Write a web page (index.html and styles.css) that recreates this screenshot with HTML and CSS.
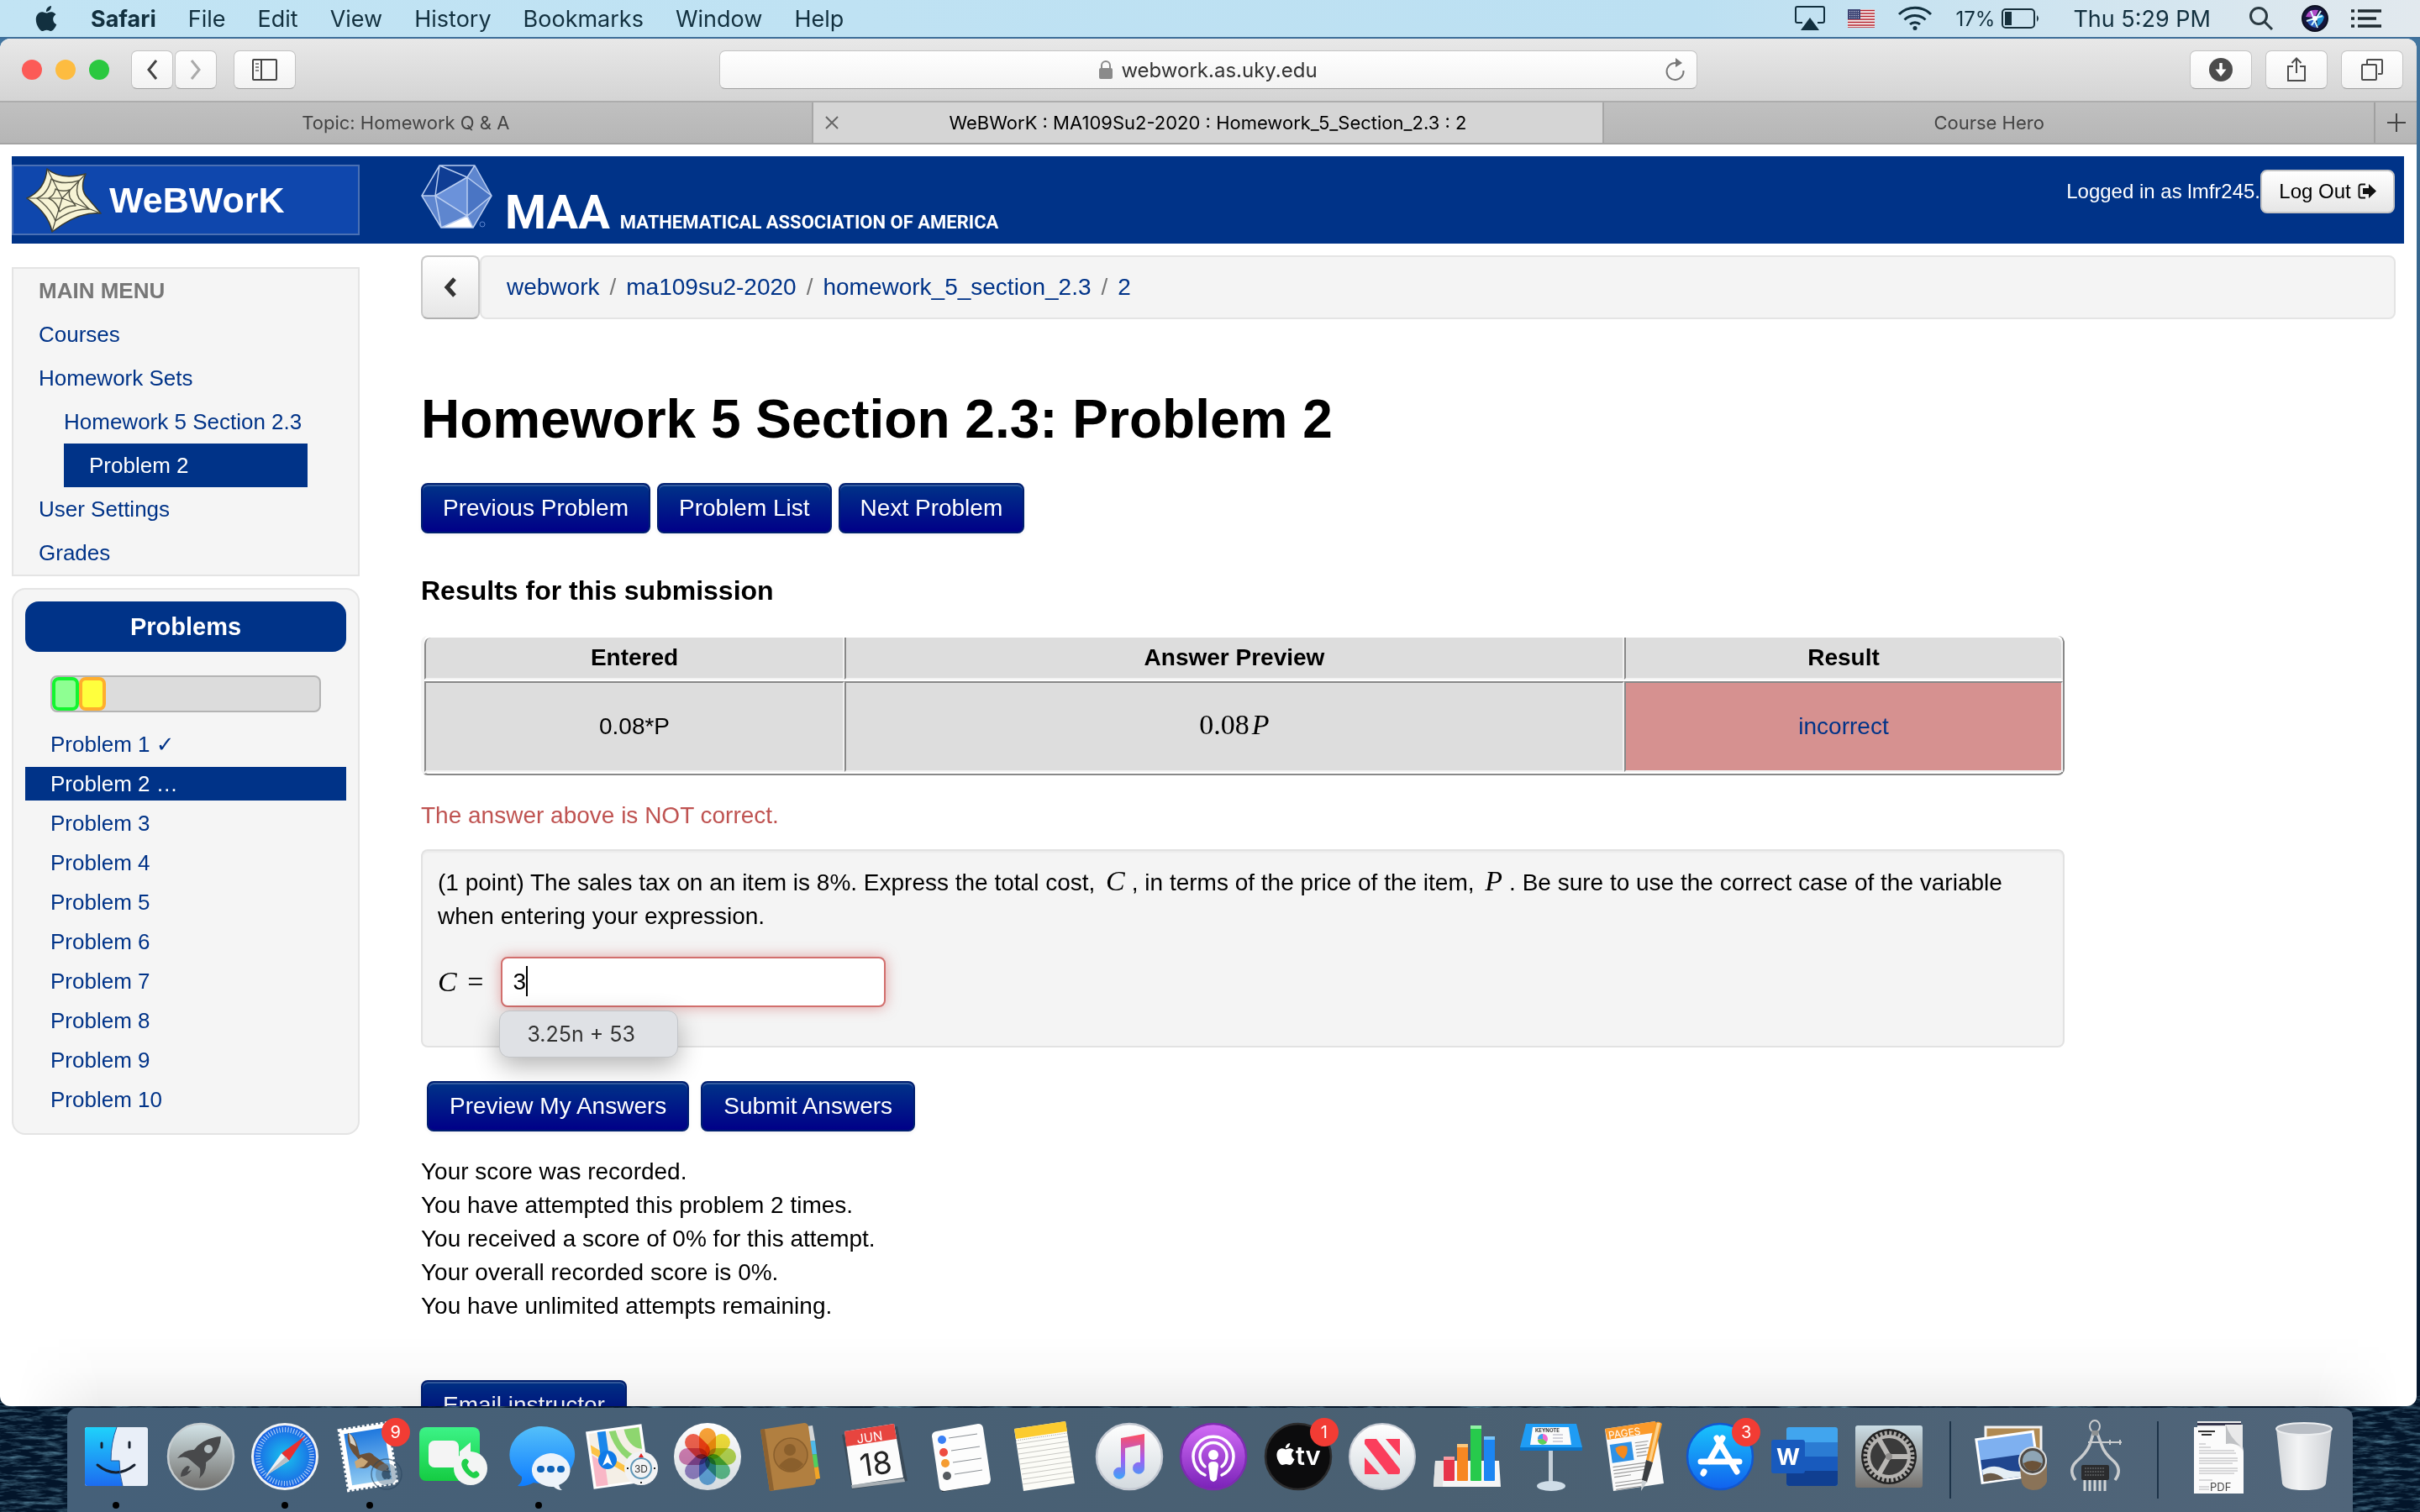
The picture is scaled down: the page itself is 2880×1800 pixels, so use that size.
FILE: index.html
```html
<!DOCTYPE html>
<html lang="en">
<head>
  <meta charset="UTF-8">
  <meta name="viewport" content="width=device-width, initial-scale=1.0">
  <title>WeBWorK : MA109Su2-2020 : Homework_5_Section_2.3 : 2</title>
  <link rel="stylesheet" href="styles.css">
</head>
<body>

  <!-- shared shapes -->
  <svg class="defs" width="0" height="0" aria-hidden="true">
    <defs>
      <symbol id="apple" viewBox="0 0 24 24">
        <path d="M12.152 6.896c-.948 0-2.415-1.078-3.96-1.04-2.04.027-3.91 1.183-4.961 3.014-2.117 3.675-.546 9.103 1.519 12.09 1.013 1.454 2.208 3.09 3.792 3.039 1.52-.065 2.09-.987 3.935-.987 1.831 0 2.35.987 3.96.948 1.637-.026 2.676-1.48 3.676-2.948 1.156-1.688 1.636-3.325 1.662-3.415-.039-.013-3.182-1.221-3.22-4.857-.026-3.04 2.48-4.494 2.597-4.559-1.429-2.09-3.623-2.324-4.39-2.376-2-.156-3.675 1.09-4.61 1.09zM15.53 3.83c.843-1.012 1.4-2.427 1.245-3.83-1.207.052-2.662.805-3.532 1.818-.78.896-1.454 2.338-1.273 3.714 1.338.104 2.715-.688 3.559-1.701"/>
      </symbol>
      <filter id="waves" x="0" y="0" width="100%" height="100%">
        <feTurbulence type="fractalNoise" baseFrequency="0.04 0.22" numOctaves="4" seed="8"/>
        <feColorMatrix values="0 0 0 0 0.12  0 0 0 0 0.29  0 0 0 0 0.40  1.8 0 0 0 -0.8"/>
      </filter>
      <linearGradient id="silver" x1="0" y1="0" x2="0" y2="1"><stop offset="0" stop-color="#fff"/><stop offset="1" stop-color="#d3dadf"/></linearGradient>
      <linearGradient id="finderL" x1="0" y1="0" x2="0" y2="1"><stop offset="0" stop-color="#1fd2fb"/><stop offset="1" stop-color="#1c6cf0"/></linearGradient>
      <linearGradient id="launch" x1="0" y1="0" x2="0" y2="1"><stop offset="0" stop-color="#d3e4e8"/><stop offset="1" stop-color="#6f6d6a"/></linearGradient>
      <radialGradient id="compass"><stop offset="0" stop-color="#19c3ee"/><stop offset="1" stop-color="#1a63e4"/></radialGradient>
      <linearGradient id="sky" x1="0" y1="0" x2="0" y2="1"><stop offset="0" stop-color="#1f78de"/><stop offset="1" stop-color="#8fcaf2"/></linearGradient>
      <linearGradient id="green" x1="0" y1="0" x2="0" y2="1"><stop offset="0" stop-color="#3cf387"/><stop offset="1" stop-color="#15cc42"/></linearGradient>
      <linearGradient id="blue" x1="0" y1="0" x2="0" y2="1"><stop offset="0" stop-color="#54c0fa"/><stop offset="1" stop-color="#0e7cff"/></linearGradient>
      <linearGradient id="note" x1="0" y1="0" x2="0" y2="1"><stop offset="0" stop-color="#ff4f60"/><stop offset=".55" stop-color="#a45cf0"/><stop offset="1" stop-color="#3aa4f8"/></linearGradient>
      <linearGradient id="purple" x1="0" y1="0" x2="0" y2="1"><stop offset="0" stop-color="#d26df6"/><stop offset="1" stop-color="#7a22b8"/></linearGradient>
      <linearGradient id="store" x1="0" y1="0" x2="0" y2="1"><stop offset="0" stop-color="#19c5fc"/><stop offset="1" stop-color="#1161ee"/></linearGradient>
      <linearGradient id="prefs" x1="0" y1="0" x2="0" y2="1"><stop offset="0" stop-color="#cbdde5"/><stop offset="1" stop-color="#77736f"/></linearGradient>
      <linearGradient id="trash" x1="0" y1="0" x2="1" y2="0"><stop offset="0" stop-color="#d5d8db"/><stop offset=".4" stop-color="#f3f4f5"/><stop offset="1" stop-color="#cfd2d6"/></linearGradient>
    </defs>
  </svg>

  <svg class="wallpaper" aria-hidden="true"><rect width="100%" height="100%" filter="url(#waves)"/></svg>

  <header class="menubar">
    <nav class="menus">
      <svg class="apple" viewBox="0 0 24 24" width="30" height="30"><use href="#apple"/></svg>
      <b>Safari</b>
      <span>File</span>
      <span>Edit</span>
      <span>View</span>
      <span>History</span>
      <span>Bookmarks</span>
      <span>Window</span>
      <span>Help</span>
    </nav>
    <div class="status">
      <svg width="36" height="30" viewBox="0 0 36 30"><path d="M9 20H3a2 2 0 0 1-2-2V3a2 2 0 0 1 2-2h30a2 2 0 0 1 2 2v15a2 2 0 0 1-2 2h-6" fill="none" stroke="#12303f" stroke-width="2"/><path d="M18 14l11 15H7z" fill="#12303f"/></svg>
      <svg class="flag" width="32" height="22" viewBox="0 0 32 22"><rect width="32" height="22" fill="#f4f0f0"/><path d="M0 1.500h32M0 5h32M0 8.500h32M0 12h32M0 15.500h32M0 19h32M0 22h32" stroke="#b5202d" stroke-width="1.700"/><rect width="15" height="12" fill="#3d4474"/><path d="M2 2.500h12M2 5h12M2 7.500h12M2 10h12" stroke="#dfe2f0" stroke-width="1" stroke-dasharray="1 1.500"/></svg>
      <svg class="wifi" width="42" height="30" viewBox="0 0 42 30" fill="none" stroke="#12303f" stroke-width="3"><path d="M2 10a27 27 0 0 1 38 0M8.500 16.500a18 18 0 0 1 25 0M15 22a9 9 0 0 1 12 0"/><circle cx="21" cy="26.500" r="2.500" fill="#12303f" stroke="none"/></svg>
      <div class="battery">
        <span>17%</span>
        <svg width="46" height="24" viewBox="0 0 46 24"><rect x="1" y="1" width="38" height="22" rx="4" fill="none" stroke="#17303c" stroke-width="2"/><rect x="4" y="4" width="8" height="16" fill="#17303c"/><path d="M42 8q4 4 0 8z" fill="#17303c"/></svg>
      </div>
      <span class="clock">Thu 5:29 PM</span>
      <svg class="search" width="30" height="30" viewBox="0 0 30 30" fill="none" stroke="#2b3a42" stroke-width="3"><circle cx="12" cy="12" r="9.500"/><path d="M19 19l9 9"/></svg>
      <svg class="siri" width="32" height="32" viewBox="0 0 32 32"><circle cx="16" cy="16" r="15" fill="#16163c" stroke="#0c1020" stroke-width="2"/><path d="M5 14Q8 4 20 6q-2 6-5 9z" fill="#b04bc8"/><path d="M18 14q6-6 9 0-2 9-8 11z" fill="#1f8fd0"/><path d="M7 20l9-5 1 12q-7-1-10-7z" fill="#2a5fc4"/><path d="M6 19l19-6M11 7l8 20M23 7L12 24" stroke="#d8fbff" stroke-width="2"/><circle cx="16" cy="16" r="3" fill="#fff"/></svg>
      <svg width="36" height="22" viewBox="0 0 36 22" stroke="#1f2a30" stroke-width="3.500"><path d="M0 2h4M8 2h28M0 11h4M8 11h22M0 20h4M8 20h28"/></svg>
    </div>
  </header>

  <main class="window">
    <div class="toolbar">
      <div class="lights"><i class="red"></i><i class="yellow"></i><i class="green"></i></div>
      <div class="history">
        <button class="tool" aria-label="Back"><svg width="16" height="26" viewBox="0 0 16 26"><path d="M13 2L4 13l9 11" fill="none" stroke="#444" stroke-width="3"/></svg></button>
        <button class="tool" aria-label="Forward"><svg width="16" height="26" viewBox="0 0 16 26"><path d="M3 2l9 11-9 11" fill="none" stroke="#aaa" stroke-width="3"/></svg></button>
      </div>
      <button class="tool wide" aria-label="Show sidebar"><svg width="30" height="26" viewBox="0 0 30 26" fill="none" stroke="#444" stroke-width="2"><rect x="1" y="1" width="28" height="24" rx="1"/><path d="M11 1v24"/><path d="M4 6h4M4 10h4M4 14h4" stroke="#888"/></svg></button>
      <div class="address">
        <svg width="16" height="22" viewBox="0 0 16 22"><rect x="0" y="9" width="16" height="13" rx="2" fill="#8a8a8a"/><path d="M3 10V6a5 5 0 0 1 10 0v4" fill="none" stroke="#8a8a8a" stroke-width="2"/></svg>
        <span>webwork.as.uky.edu</span>
        <button class="reload" aria-label="Reload"><svg width="26" height="28" viewBox="0 0 26 28"><path d="M22.500 15a10 10 0 1 1-10-9h3" fill="none" stroke="#777" stroke-width="2"/><path d="M13 0l8 6-8 5z" fill="#777"/></svg></button>
      </div>
      <div class="actions">
        <button class="tool wide" aria-label="Downloads"><svg width="28" height="28" viewBox="0 0 28 28"><circle cx="14" cy="14" r="14" fill="#4c4c4c"/><path d="M14 6v9" stroke="#fff" stroke-width="3.500"/><path d="M7.500 13.500h13L14 22z" fill="#fff"/></svg></button>
        <button class="tool wide" aria-label="Share"><svg width="24" height="32" viewBox="0 0 24 32" fill="none" stroke="#4c4c4c" stroke-width="2"><path d="M8 12H2v17h20V12h-6M12 20V3M6.500 8L12 2.500 17.500 8"/></svg></button>
        <button class="tool wide" aria-label="Show tabs"><svg width="26" height="26" viewBox="0 0 26 26" fill="none" stroke="#4c4c4c" stroke-width="2"><rect x="1" y="7" width="17" height="18" rx="1"/><path d="M7 7V2a1 1 0 0 1 1-1h16a1 1 0 0 1 1 1v15a1 1 0 0 1-1 1h-4"/></svg></button>
      </div>
    </div>

    <div class="tabs">
      <div class="tab">Topic: Homework Q &amp; A</div>
      <div class="tab current">
        <button class="close" aria-label="Close tab"><svg width="16" height="16" viewBox="0 0 16 16"><path d="M1 1l14 14M15 1L1 15" stroke="#666" stroke-width="2"/></svg></button>
        WeBWorK : MA109Su2-2020 : Homework_5_Section_2.3 : 2
      </div>
      <div class="tab">Course Hero</div>
      <button class="newtab" aria-label="New tab"><svg width="22" height="22" viewBox="0 0 22 22"><path d="M11 0v22M0 11h22" stroke="#444" stroke-width="2"/></svg></button>
    </div>

    <div class="page">
      <div class="masthead">
        <a class="brand" href="#">
          <svg width="92" height="78" viewBox="0 0 92 78" stroke-linejoin="round">
            <path d="M2 37Q24 27 26 2q16 14 46 6-7 16 0 26l18 21Q64 52 32 77 28 55 2 37z" fill="#f7f4d5" stroke="#3a3a2c" stroke-width="1.500"/>
            <path d="M14 37Q27 32 31 14q13 8 33 2-5 13 0 21l12 13Q56 49 36 64 31 50 14 37zM28 37q7-4 8-11 8 4 17 1-2 8 2 12l5 7q-11-1-19 7-3-11-13-16z" fill="none" stroke="#5a5a48" stroke-width="1.500"/>
            <path d="M2 37l42 0M26 2l18 35M72 8L44 37M90 55L44 37M32 77l12-40" stroke="#4a4a3c" stroke-width="1.200"/>
          </svg>
          <span>WeBWorK</span>
        </a>
        <div class="maa">
          <svg width="86" height="76" viewBox="0 0 86 76" stroke-linejoin="round">
            <path d="M22 1h42l20 36-22 38H24L1 37z" fill="#5e86cf"/>
            <path d="M22 1h42L55 15z" fill="#0b3a90"/><path d="M22 1l33 14-38 22-16 0z" fill="#0f3d94"/>
            <path d="M55 15l29 22-29 24z" fill="#4a75c4"/><path d="M55 15v46L17 37z" fill="#6b92da"/>
            <path d="M55 61l7 14H24z" fill="#fff"/>
            <path d="M22 1h42l20 36-22 38H24L1 37zM22 1l33 14L64 1M55 15L17 37H1M22 1l-5 36 38 24V15l29 22-29 24 7 14M17 37l7 38 31-14" fill="none" stroke="#b9cdf0" stroke-width="1.500"/>
            <circle cx="73" cy="71" r="3" fill="none" stroke="#5e86cf"/>
          </svg>
          <strong>MAA</strong>
          <em>MATHEMATICAL ASSOCIATION OF AMERICA</em>
        </div>
        <div class="login">
          <span>Logged in as lmfr245.</span>
          <button class="logout">Log Out <svg width="22" height="20" viewBox="0 0 22 20"><path d="M9 1.500H4a2.500 2.500 0 0 0-2.500 2.500v11A2.500 2.500 0 0 0 4 17.500h5" fill="none" stroke="#111" stroke-width="2"/><path d="M6 6h7V1l9 8.500-9 8.500v-5H6z" fill="#111"/></svg></button>
        </div>
      </div>

      <div class="columns">
        <aside class="sidebar">
          <nav class="mainmenu">
            <h2>MAIN MENU</h2>
            <ul>
              <li><a href="#">Courses</a></li>
              <li><a href="#">Homework Sets</a>
                <ul>
                  <li><a href="#">Homework 5 Section 2.3</a></li>
                  <li><a href="#" class="active">Problem 2</a></li>
                </ul>
              </li>
              <li><a href="#">User Settings</a></li>
              <li><a href="#">Grades</a></li>
            </ul>
          </nav>

          <nav class="problems">
            <h2>Problems</h2>
            <div class="progress"><i class="done"></i><i class="partial"></i></div>
            <ul>
              <li><a href="#">Problem 1 <span class="check">✓</span></a></li>
              <li><a href="#" class="active">Problem 2 …</a></li>
              <li><a href="#">Problem 3</a></li>
              <li><a href="#">Problem 4</a></li>
              <li><a href="#">Problem 5</a></li>
              <li><a href="#">Problem 6</a></li>
              <li><a href="#">Problem 7</a></li>
              <li><a href="#">Problem 8</a></li>
              <li><a href="#">Problem 9</a></li>
              <li><a href="#">Problem 10</a></li>
            </ul>
          </nav>
        </aside>

        <section class="content">
          <div class="crumbs">
            <button class="back" aria-label="Up one level"><svg width="18" height="26" viewBox="0 0 18 26"><path d="M14 3L5 13l9 10" fill="none" stroke="#333" stroke-width="5"/></svg></button>
            <div class="trail">
              <a href="#">webwork</a><i>/</i><a href="#">ma109su2-2020</a><i>/</i><a href="#">homework_5_section_2.3</a><i>/</i><a href="#">2</a>
            </div>
          </div>

          <h1>Homework 5 Section 2.3: Problem 2</h1>

          <div class="pager">
            <button class="btn">Previous Problem</button>
            <button class="btn">Problem List</button>
            <button class="btn">Next Problem</button>
          </div>

          <h3>Results for this submission</h3>
          <table class="results">
            <colgroup><col class="entered"><col><col class="result"></colgroup>
            <tr><th>Entered</th><th>Answer Preview</th><th>Result</th></tr>
            <tr><td>0.08*P</td><td><span class="math">0.08<var>P</var></span></td><td class="wrong"><a href="#">incorrect</a></td></tr>
          </table>

          <p class="error">The answer above is NOT correct.</p>

          <div class="problem">
            <p>(1 point) The sales tax on an item is 8%. Express the total cost, <var class="math">C</var>, in terms of the price of the item, <var class="math">P</var>. Be sure to use the correct case of the variable when entering your expression.</p>
            <div class="answer">
              <label for="answer" class="math"><var>C</var> =</label>
              <div class="field">
                <input id="answer" type="text" value="3" autocomplete="off">
                <span class="caret"></span>
                <div class="suggest">3.25n + 53</div>
              </div>
            </div>
          </div>

          <div class="submit">
            <button class="btn">Preview My Answers</button>
            <button class="btn">Submit Answers</button>
          </div>

          <p class="score">
            Your score was recorded.<br>
            You have attempted this problem 2 times.<br>
            You received a score of 0% for this attempt.<br>
            Your overall recorded score is 0%.<br>
            You have unlimited attempts remaining.
          </p>

          <button class="btn">Email instructor</button>
        </section>
      </div>
    </div>
  </main>

  <footer class="dock">
    <!-- Finder -->
    <div class="slot running"><svg viewBox="0 0 84 84"><rect x="5" y="7" width="75" height="70" rx="3" fill="#e9eff8"/><path d="M8 7h35q-7 18-7 40h10q0 16 4 30H8a3 3 0 0 1-3-3V10a3 3 0 0 1 3-3z" fill="url(#finderL)"/><path d="M25 26v5M58 25v6M20 52q22 18 44 0" fill="none" stroke="#16202e" stroke-width="3" stroke-linecap="round"/><path d="M43 7q-7 18-7 40h10q0 16 4 30" fill="none" stroke="#2a5b9c" stroke-width="1"/></svg></div>
    <!-- Launchpad -->
    <div class="slot"><svg viewBox="0 0 84 84"><circle cx="42" cy="42" r="39" fill="url(#launch)" stroke="#c6cdd0" stroke-width="2.500"/><path d="M66 18Q44 20 34 34q-11-1-20 10 8-3 13 0l14 12q1 7-1 12 9-7 8-19 17-11 18-31z" fill="#48494b"/><circle cx="51" cy="33" r="5" fill="#b6c0c3"/><path d="M26 53q-8 4-8 13 9-1 13-8l-5 2 3-6z" fill="#48494b"/></svg></div>
    <!-- Safari -->
    <div class="slot running"><svg viewBox="0 0 84 84"><circle cx="42" cy="42" r="40" fill="#f1f2f3"/><circle cx="42" cy="42" r="37" fill="url(#compass)"/><circle cx="42" cy="42" r="32" fill="none" stroke="#fff" stroke-width="6" stroke-dasharray="1 2.350" opacity=".7"/><path d="M67 17L47 47l-9-9z" fill="#e8302f"/><path d="M19 65l19-27 9 9z" fill="#eef0f2"/><path d="M19 65l24-23 4 5z" fill="#b9bec4"/></svg></div>
    <!-- Mail -->
    <div class="slot running"><svg viewBox="0 0 84 84"><g transform="rotate(-9 40 42)"><rect x="11" y="6" width="58" height="72" fill="#fff" stroke="#fff" stroke-width="4" stroke-dasharray="3 2.500"/><rect x="16" y="11" width="48" height="62" fill="url(#sky)"/></g><path d="M16 14q9 2 14 26l8-2q6-2 9 3l17 12 1 8q-15-2-22-9-6 7-17 2l5-6-5-6q-12-12-10-28z" fill="#6b5038"/><path d="M24 48l8-5 8 5-5 6-9 2z" fill="#caa777"/><path d="M17 14q6 4 9 16l-7-4z" fill="#d9d2c6"/><circle cx="62" cy="63" r="18" fill="none" stroke="#2b465f" stroke-width="1.500" opacity=".6"/><circle cx="62" cy="63" r="13" fill="#5d7d97" opacity=".5"/><use href="#apple" x="55" y="55" width="14" height="14" fill="#2b465f" opacity=".8"/></svg><b class="badge">9</b></div>
    <!-- FaceTime -->
    <div class="slot"><svg viewBox="0 0 84 84"><rect x="1" y="7" width="72" height="64" rx="8" fill="url(#green)"/><rect x="12" y="23" width="36" height="32" rx="7" fill="#f4f4f4"/><path d="M49 36l13-11v28L49 44z" fill="#f4f4f4"/><circle cx="62" cy="56" r="20" fill="#f3f5f4"/><path d="M53 46q4-4 7 2l-2 4q2 6 7 9l4-2q6 4 2 7-5 5-14-4-9-10-4-16z" fill="#1fd04a"/></svg></div>
    <!-- Messages -->
    <div class="slot running"><svg viewBox="0 0 84 84"><path d="M42 6a40 34 0 1 1-6 67q-8 5-19 4 6-5 5-11A40 34 0 0 1 42 6z" fill="url(#blue)"/><path d="M56 38a24 20 0 0 1 10 38q1 4 4 6-6 0-10-4A24 20 0 0 1 56 38z" fill="#edf3fa"/><path d="M44 57h1M56 57h1M68 57h1" stroke="#0f62b8" stroke-width="8" stroke-linecap="round"/></svg></div>
    <!-- Maps -->
    <div class="slot"><svg viewBox="0 0 84 84"><g transform="rotate(-8 36 42)"><rect x="4" y="9" width="64" height="66" fill="#f4efe6" stroke="#fff" stroke-width="3"/><path d="M48 11h18v26q-16-4-18-26z" fill="#8ed66f"/><path d="M30 11h8q4 30 28 36v12Q36 46 30 11z" fill="#8ed66f"/><path d="M6 24l52 42v8L6 34z" fill="#fcc244"/><path d="M6 36l14 12v26H6z" fill="#f9b7c6"/><path d="M16 10h10v34H16z" fill="#1a86ea"/></g><circle cx="24" cy="46" r="11" fill="#0f7ae8"/><path d="M24 38l6 15-6-4-6 4z" fill="#fff"/><circle cx="64" cy="56" r="20" fill="#f2f3f4"/><circle cx="64" cy="56" r="12" fill="none" stroke="#5f97b8" stroke-width="2"/><path d="M64 38l3 5h-6z" fill="#e02020"/><path d="M64 72v2M47 56h2M79 56h2" stroke="#222" stroke-width="2"/><text x="64" y="61" font-size="12" text-anchor="middle" fill="#333">3D</text></svg></div>
    <!-- Photos -->
    <div class="slot"><svg viewBox="0 0 84 84"><circle cx="42" cy="42" r="40" fill="url(#silver)"/><g class="petals"><rect x="32" y="8" width="20" height="34" rx="10" fill="#fba338"/><rect x="32" y="8" width="20" height="34" rx="10" fill="#f4df3a" transform="rotate(45 42 42)"/><rect x="32" y="8" width="20" height="34" rx="10" fill="#b8d852" transform="rotate(90 42 42)"/><rect x="32" y="8" width="20" height="34" rx="10" fill="#62c48f" transform="rotate(135 42 42)"/><rect x="32" y="8" width="20" height="34" rx="10" fill="#68aee2" transform="rotate(180 42 42)"/><rect x="32" y="8" width="20" height="34" rx="10" fill="#9a86c8" transform="rotate(225 42 42)"/><rect x="32" y="8" width="20" height="34" rx="10" fill="#d681b4" transform="rotate(270 42 42)"/><rect x="32" y="8" width="20" height="34" rx="10" fill="#f4634e" transform="rotate(315 42 42)"/></g></svg></div>
    <!-- Contacts -->
    <div class="slot"><svg viewBox="0 0 84 84"><path d="M60 6l7-1 3 18-8 1z" fill="#d3d6d8"/><path d="M62 24l8-1 2 16-8 1z" fill="#4fb9ea"/><path d="M64 40l8-1 2 15-8 2z" fill="#51cf5e"/><path d="M65 56l9-2 2 14-9 2z" fill="#f2a526"/><path d="M5 10L57 2q4 0 5 4l9 64q0 5-4 6l-51 7z" fill="#b17f40"/><path d="M5 10l5-1 11 73-5 1z" fill="#8d6230"/><circle cx="41" cy="40" r="20" fill="#a5743a" stroke="#8a5f2c" stroke-width="1.500"/><circle cx="40" cy="34" r="7" fill="#8a5f2c"/><path d="M27 53q14-18 29-2-13 16-29 2z" fill="#8a5f2c"/></svg></div>
    <!-- Calendar -->
    <div class="slot"><svg viewBox="0 0 84 84"><path d="M2 16L68 6l12 65-66 10z" fill="#3a4a58"/><path d="M13 76l63-8 1 4-63 8z" fill="#a9b0b5"/><path d="M5 12L64 3l11 64-61 9z" fill="#fcfcfc"/><path d="M5 12L64 3l3 18-60 9z" fill="#e7453f"/><g transform="rotate(-8 40 42)" text-anchor="middle"><text x="38" y="24" font-size="15" fill="#fff">JUN</text><text x="41" y="64" font-size="37" fill="#222">18</text></g></svg></div>
    <!-- Reminders -->
    <div class="slot"><svg viewBox="0 0 84 84"><path d="M8 18L20 84l54-9 3-10z" fill="#20272d"/><path d="M13 12l50-9q5 0 6 5l9 61q0 5-4 6l-51 8q-5 0-6-4L8 18q0-5 5-6z" fill="#fdfdfd"/><circle cx="20" cy="22" r="5" fill="#3a80f5"/><circle cx="22" cy="37" r="5" fill="#ee4b40"/><circle cx="24" cy="50" r="5" fill="#f59c32"/><circle cx="26" cy="65" r="5" fill="#565b60"/><path d="M28 20l34-5M31 35l34-5M33 49l34-5M35 63l33-5" stroke="#8d9297" stroke-width="1.200"/></svg></div>
    <!-- Notes -->
    <div class="slot"><svg viewBox="0 0 84 84"><g transform="translate(2 0)"><path d="M4 9L65 0l11 74-61 9z" fill="#fcfcf7"/><path d="M4 9L65 0l2 12-61 9z" fill="#fccb2f"/><path d="M7 27l60-9M8 33l60-9M9 39l60-9M10 45l60-9M11 51l60-9M12 57l60-9M13 63l60-9M14 69l60-9M14 75l61-9" stroke="#c9c9c4" stroke-width="1"/><path d="M6 23l61-9" stroke="#999" stroke-width="1" stroke-dasharray="1 1.500"/></g></svg></div>
    <!-- Music -->
    <div class="slot"><svg viewBox="0 0 84 84"><circle cx="42" cy="42" r="39" fill="url(#silver)" stroke="#c4c9d2" stroke-width="2.500"/><path d="M32 20l28-5v40a7 7 0 1 1-5-6V28l-18 4v30a7 7 0 1 1-5-7z" fill="url(#note)"/></svg></div>
    <!-- Podcasts -->
    <div class="slot"><svg viewBox="0 0 84 84"><circle cx="42" cy="42" r="39" fill="url(#purple)" stroke="#7d2bb0" stroke-width="2.500"/><g fill="none" stroke="#fff" stroke-width="3.500" stroke-linecap="round"><path d="M32 64a24 24 0 1 1 20 0"/><path d="M32 54a16 16 0 1 1 20 0"/></g><circle cx="42" cy="40" r="6" fill="#fff"/><path d="M42 48q6 0 6 5l-2 16q-4 6-8 0l-2-16q0-5 6-5z" fill="#fff"/></svg></div>
    <!-- TV -->
    <div class="slot"><svg viewBox="0 0 84 84"><circle cx="42" cy="42" r="39" fill="#0c0c0d" stroke="#2c2c2d" stroke-width="2.500"/><use href="#apple" x="14" y="26" width="26" height="26" fill="#fff"/><text x="39" y="52" font-size="31" font-weight="600" fill="#fff">tv</text></svg><b class="badge">1</b></div>
    <!-- News -->
    <div class="slot"><svg viewBox="0 0 84 84"><circle cx="42" cy="42" r="39" fill="url(#silver)" stroke="#c4c9d2" stroke-width="2"/><path d="M21 23q0-2 2-2h12l28 36v4q0 2-2 2H49L21 27zM46 21h17v20zM21 43v20h18z" fill="#fb3e5c"/></svg></div>
    <!-- Numbers -->
    <div class="slot"><svg viewBox="0 0 84 84"><path d="M4 47h76l2 31H2z" fill="#f6f6f6"/><path d="M4 47h10l-1 31H2z" fill="#e3e3e3"/><rect x="14" y="42" width="13" height="29" rx="1" fill="#e7354a"/><rect x="30" y="27" width="13" height="44" rx="1" fill="#f78722"/><rect x="46" y="5" width="13" height="66" rx="1" fill="#27ca4c"/><rect x="62" y="18" width="13" height="53" rx="1" fill="#1c86f2"/><path d="M14 44h13" stroke="#f99aa0" stroke-width="4"/><path d="M30 29h13" stroke="#fdc77c" stroke-width="4"/><path d="M46 7h13" stroke="#8ff3a4" stroke-width="4"/><path d="M62 20h13" stroke="#79c6fb" stroke-width="4"/></svg></div>
    <!-- Keynote -->
    <div class="slot"><svg viewBox="0 0 84 84"><rect x="39" y="34" width="5" height="44" fill="#c5cfd8"/><ellipse cx="42" cy="77" rx="17" ry="6" fill="#cfdde8"/><path d="M12 3h60l7 28v4H5v-4z" fill="#1f9cf4"/><path d="M5 31h74v4H5z" fill="#0a74c9"/><path d="M20 7h43l3 21H17z" fill="#fbfbfb"/><text x="23" y="13" font-size="6" font-weight="700" fill="#333">KEYNOTE</text><circle cx="32" cy="21" r="6" fill="#f06bd0"/><path d="M32 21v-6a6 6 0 0 0-6 6z" fill="#37a6f0"/><path d="M32 21l-6 1a6 6 0 0 0 11 3z" fill="#5ed15a"/><path d="M44 16h12M44 20h12M44 24h12" stroke="#aab" stroke-width="1"/></svg></div>
    <!-- Pages -->
    <div class="slot"><svg viewBox="0 0 84 84"><path d="M5 9L65 0l10 74-60 9z" fill="#fafafa"/><path d="M5 9L65 0l3 13-60 9z" fill="#fb9a2a"/><g transform="rotate(-8 40 42)"><text x="13" y="17" font-size="12" fill="#fff">PAGES</text><rect x="13" y="24" width="26" height="22" fill="#2f92e6"/><path d="M19 29q7-4 14 0 1 8-6 14-8-6-8-14z" fill="#f58a1e"/><path d="M43 26h16M43 30h14M43 34h16M43 38h12M43 42h14M13 51h40M13 55h38M13 59h40M13 63h20M13 70h36M13 74h38M13 78h30" stroke="#999" stroke-width="1.200"/></g><path d="M64 3q4-5 9 0L62 49l-8-3z" fill="#f59b26"/><path d="M67 2l4 0-11 46-3-1z" fill="#fcd08a"/><path d="M54 46l8 3-7 23-6-2z" fill="#3c3f42"/><path d="M49 70l6 2-7 11z" fill="#c9ced2"/></svg></div>
    <!-- App Store -->
    <div class="slot"><svg viewBox="0 0 84 84"><circle cx="42" cy="42" r="39" fill="url(#store)" stroke="#1257cf" stroke-width="2.500"/><g stroke="#fff" stroke-width="7" stroke-linecap="round"><path d="M45 20L29 48M38 20l24 40M19 48h46M23 60l-1 2"/></g></svg><b class="badge">3</b></div>
    <!-- Word -->
    <div class="slot"><svg viewBox="0 0 84 84"><rect x="20" y="7" width="61" height="70" rx="3" fill="#41a5ee"/><path d="M20 25h61v17H20z" fill="#2b7cd3"/><path d="M20 42h61v17H20z" fill="#185abd"/><path d="M20 59h61v15q0 3-3 3H23q-3 0-3-3z" fill="#103f91"/><rect x="2" y="22" width="40" height="40" rx="3" fill="#185abd"/><text x="22" y="52" font-size="27" font-weight="700" text-anchor="middle" fill="#fff">W</text></svg></div>
    <!-- System Preferences -->
    <div class="slot"><svg viewBox="0 0 84 84"><rect x="2" y="5" width="80" height="74" rx="3" fill="url(#prefs)"/><circle cx="42" cy="42" r="33" fill="#232323"/><circle cx="42" cy="42" r="28" fill="none" stroke="#aaa8a5" stroke-width="5" stroke-dasharray="3 2.500"/><circle cx="42" cy="42" r="24" fill="#3b3b3b" stroke="#b5b3b0" stroke-width="4"/><path d="M42 42h24M42 42L30 21M42 42L30 63" stroke="#b9b7b4" stroke-width="6"/><circle cx="42" cy="42" r="4" fill="#8e8c8a"/></svg></div>
    <i class="divider"></i>
    <!-- Preview -->
    <div class="slot"><svg viewBox="0 0 84 84"><rect x="10" y="7" width="66" height="40" fill="#b08a52" stroke="#f2f2f2" stroke-width="3"/><g transform="rotate(-8 34 42)"><rect x="2" y="17" width="68" height="52" fill="#7eb0f0" stroke="#fff" stroke-width="3"/><path d="M4 42h65v26H4z" fill="#20468f"/><path d="M4 54q14-6 26 2t38 6v6H4z" fill="#e5eef4"/><path d="M4 60q14-4 24 8H4z" fill="#6a5a48"/></g><path d="M50 48h33v24q-4 10-17 10-10-1-13-9z" fill="#8a7358"/><circle cx="66" cy="47" r="16" fill="#4f4a45" stroke="#d9dcde" stroke-width="2"/><circle cx="66" cy="47" r="12" fill="#8ea5b5"/><path d="M55 50q10-6 22 0-3 9-11 9t-11-9z" fill="#6b5238"/></svg></div>
    <!-- System Information -->
    <div class="slot"><svg viewBox="0 0 84 84"><g fill="none" stroke="#c9ccce"><ellipse cx="40" cy="6" rx="6" ry="7" stroke-width="2"/><path d="M39 12L34 28Q30 38 18 48 8 58 17 70M42 12l6 16q3 10 15 20 10 10 1 22" stroke-width="3.500"/><path d="M32 25h40M58 22v6M70 22v6" stroke-width="2"/></g><path d="M36 11h9l-1 6h-7z" fill="#8e9192"/><rect x="24" y="52" width="33" height="18" rx="2" fill="#2b2c2e"/><path d="M28 56h24M28 60h24M28 64h24" stroke="#76797b" stroke-width="1" stroke-dasharray="2 1"/><path d="M28 70v13M34 70v13M40 70v13M46 70v13M52 70v13" stroke="#d0d4d6" stroke-width="3"/></svg></div>
    <i class="divider"></i>
    <!-- PDF stack -->
    <div class="slot"><svg viewBox="0 0 84 84"><path d="M16 0h52v8H16z" fill="#f0f0f0"/><path d="M16 2h52v3H16z" fill="#33334a"/><path d="M12 7h42q18 14 17 34v45H12z" fill="#fbfbfb"/><path d="M49 4q2 12 1 22 10-2 20 8V4z" fill="#e9e9ea"/><path d="M50 4q4 14 18 26-10-5-18-3z" fill="#bfc1c4"/><path d="M17 12h20M21 16h12" stroke="#333" stroke-width="2"/><path d="M18 27h8M18 31h14M18 35h42M18 38h44M18 44h46M18 47h46M18 50h40M18 56h46M18 59h46M18 62h42M18 70h16M18 78h12M18 81h12" stroke="#b5b5b8" stroke-width="1"/><text x="31" y="83" font-size="13" fill="#444">PDF</text></svg></div>
    <!-- Trash -->
    <div class="slot"><svg viewBox="0 0 84 84"><path d="M9 9h66l-7 65q-2 8-26 8t-26-8z" fill="url(#trash)"/><ellipse cx="42" cy="9" rx="33" ry="7" fill="#b9bec5" stroke="#eceef0" stroke-width="2"/></svg></div>
  </footer>

</body>
</html>
```
FILE: styles.css
```css
* {
  box-sizing: border-box;
}
body {
  margin: 0;
  height: 100vh;
  display: flex;
  flex-direction: column;
  overflow: hidden;
  font-family: "Liberation Sans", Arial, sans-serif;
  color: #000;
  background: linear-gradient(#4478a3, #1d4668 50%, #03152a 93%);
}
h1, h2, h3, p, ul {
  margin: 0;
  padding: 0;
}
ul {
  list-style: none;
}
a {
  color: #003388;
  text-decoration: none;
}
button {
  font-family: inherit;
}
svg {
  display: block;
}
.defs {
  position: absolute;
}
.wallpaper {
  position: absolute;
  bottom: 0;
  left: 0;
  width: 100%;
  height: 140px;
  z-index: -1;
}

/* menu bar */
.menubar {
  flex: none;
  height: 46px;
  padding: 0 46px 0 40px;
  display: flex;
  align-items: center;
  justify-content: space-between;
  border-bottom: 2px solid #3d6d98;
  background: linear-gradient(90deg, #c2e4f4, #bce0f2 70%, #e2e9ee);
  font-family: Inter, sans-serif;
  font-size: 27px;
  color: #12303f;
}
.menus {
  display: flex;
  align-items: center;
  gap: 38px;
}
.apple {
  fill: #12303f;
}
.status {
  display: flex;
  align-items: center;
  gap: 27px;
}
.battery {
  display: flex;
  align-items: center;
  gap: 8px;
  font-size: 24px;
}
.clock {
  margin: 0 18px 0 12px;
}
.search {
  margin-right: 6px;
}

/* browser window */
.window {
  flex: 1;
  min-height: 0;
  margin: 0 4px 2px 0;
  display: flex;
  flex-direction: column;
  overflow: hidden;
  position: relative;
  border-radius: 12px;
  background: #fff;
}
.window::after {
  content: "";
  position: absolute;
  left: 20px;
  right: 20px;
  bottom: 0;
  height: 84px;
  background: linear-gradient(rgba(0, 0, 0, 0), rgba(0, 0, 0, 0.02) 50%, rgba(0, 0, 0, 0.07));
  -webkit-mask-image: linear-gradient(90deg, transparent, #000 100px, #000 calc(100% - 100px), transparent);
  mask-image: linear-gradient(90deg, transparent, #000 100px, #000 calc(100% - 100px), transparent);
  pointer-events: none;
}
.toolbar {
  flex: none;
  height: 76px;
  padding: 0 16px 0 26px;
  display: flex;
  align-items: center;
  border-bottom: 2px solid #adadad;
  background: linear-gradient(#e8e8e8, #d4d4d4);
}
.lights {
  display: flex;
  gap: 16px;
  margin-right: 26px;
}
.lights i {
  width: 24px;
  height: 24px;
  border-radius: 50%;
}
.lights .red {
  background: #fc5b57;
}
.lights .yellow {
  background: #fdbc40;
}
.lights .green {
  background: #2bc840;
}
.history {
  display: flex;
  gap: 2px;
  margin-right: 20px;
}
.tool {
  width: 50px;
  height: 46px;
  padding: 0;
  display: flex;
  align-items: center;
  justify-content: center;
  border: 1px solid #c4c4c4;
  border-bottom-color: #a0a0a0;
  border-radius: 7px;
  background: linear-gradient(#fff, #f2f2f2);
}
.tool.wide {
  width: 74px;
}
.address {
  width: 1164px;
  height: 46px;
  margin: 0 auto 0 504px;
  position: relative;
  display: flex;
  align-items: center;
  justify-content: center;
  gap: 10px;
  border: 1px solid #c4c4c4;
  border-bottom-color: #a0a0a0;
  border-radius: 7px;
  background: linear-gradient(#fff, #f3f3f3);
  font-family: Inter, sans-serif;
  font-size: 24px;
  color: #333;
}
.reload {
  position: absolute;
  right: 12px;
  padding: 0;
  border: 0;
  background: none;
}
.actions {
  display: flex;
  gap: 16px;
}
.tabs {
  flex: none;
  height: 50px;
  display: flex;
  border-bottom: 2px solid #a3a3a3;
  background: linear-gradient(#c0c0c0, #b6b6b6);
  font-family: Inter, sans-serif;
  font-size: 22px;
  color: #444;
}
.tab {
  flex: 967;
  display: flex;
  align-items: center;
  justify-content: center;
  position: relative;
}
.tab.current {
  flex: 941;
  border: 1px solid #a6a6a6;
  border-width: 0 2px;
  background: #d5d5d5;
  color: #000;
}
.tab:nth-child(3) {
  flex: 917;
}
.close {
  position: absolute;
  left: 14px;
  padding: 0;
  border: 0;
  background: none;
}
.newtab {
  width: 51px;
  padding: 0;
  display: flex;
  align-items: center;
  justify-content: center;
  border: 0;
  border-left: 2px solid #a0a0a0;
  background: none;
}

/* page */
.page {
  padding: 14px 15px 0 14px;
}
.masthead {
  height: 104px;
  padding: 10px 11px 0 0;
  display: flex;
  align-items: flex-start;
  background: #003388;
  color: #fff;
}
.brand {
  width: 414px;
  height: 84px;
  padding-left: 14px;
  display: flex;
  align-items: center;
  gap: 8px;
  border: 2px solid #4a70b4;
  background: #0f47ad;
  color: #fff;
  font-size: 43px;
  font-weight: bold;
}
.maa {
  margin-left: 73px;
  display: flex;
  align-items: baseline;
}
.maa strong {
  margin: 0 12px 0 14px;
  font-family: Roboto, sans-serif;
  font-size: 56px;
  line-height: 64px;
}
.maa em {
  font-family: Roboto, sans-serif;
  font-size: 22px;
  font-style: normal;
  font-weight: bold;
}
.login {
  margin: 6px 0 0 auto;
  display: flex;
  align-items: center;
  font-size: 24px;
}
.logout {
  width: 160px;
  height: 52px;
  padding: 0;
  display: flex;
  align-items: center;
  justify-content: center;
  gap: 8px;
  border: 2px solid #c5c5c5;
  border-radius: 8px;
  background: linear-gradient(#fff, #e6e6e6);
  font-size: 24px;
}
.columns {
  display: flex;
  align-items: flex-start;
  gap: 73px;
}
.sidebar {
  flex: none;
  width: 414px;
  margin-top: 28px;
  font-size: 26px;
}
.mainmenu {
  border: 2px solid #e4e4e4;
  padding: 0 60px 0 30px;
  background: #f5f5f5;
  line-height: 52px;
}
.mainmenu h2 {
  font-size: 26px;
  color: #777;
}
.mainmenu a {
  display: block;
  white-space: nowrap;
}
.mainmenu ul ul {
  margin-left: 30px;
}
.mainmenu .active {
  padding-left: 30px;
}
.sidebar .active {
  background: #003388;
  color: #fff;
}
.problems {
  margin-top: 14px;
  padding: 14px 14px 20px;
  border: 2px solid #e4e4e4;
  border-radius: 16px;
  background: #f5f5f5;
}
.problems h2 {
  border-radius: 16px;
  background: #003388;
  color: #fff;
  font-size: 29px;
  line-height: 60px;
  text-align: center;
}
.progress {
  height: 44px;
  margin: 28px 30px 18px;
  display: flex;
  border: 2px solid #b4b4b4;
  border-radius: 8px;
  background: #dcdcdc;
}
.progress i {
  width: 32px;
  border: 4px solid;
  border-radius: 8px;
}
.progress .done {
  border-color: #13f62f;
  background: #8eff92;
}
.progress .partial {
  border-color: #ffae2c;
  background: #ffff3d;
}
.problems ul {
  display: flex;
  flex-direction: column;
  gap: 7px;
}
.problems a {
  display: block;
  padding-left: 30px;
  line-height: 40px;
}
.check {
  font-family: "DejaVu Sans", sans-serif;
  font-weight: bold;
  line-height: 1;
}

/* problem column */
.content {
  flex: 1;
  margin: 14px 10px 0 0;
  font-size: 28px;
  line-height: 40px;
}
.crumbs {
  display: flex;
}
.back {
  width: 70px;
  height: 76px;
  padding: 0;
  display: flex;
  align-items: center;
  justify-content: center;
  border: 2px solid #c8c8c8;
  border-bottom-color: #b0b0b0;
  border-radius: 8px;
  background: linear-gradient(#fff, #e6e6e6);
}
.trail {
  flex: 1;
  padding-left: 30px;
  border: 2px solid #e4e4e4;
  border-radius: 8px;
  background: #f4f4f4;
  line-height: 72px;
}
.trail i {
  margin: 0 12px;
  font-style: normal;
  color: #777;
}
h1 {
  margin: 79px 0 36px;
  font-size: 64px;
  line-height: 80px;
}
h3 {
  margin-top: 48px;
  font-size: 32px;
}
.pager {
  display: flex;
  gap: 8px;
}
.btn {
  height: 60px;
  padding: 0 24px;
  border: 2px solid #001f70;
  border-radius: 8px;
  background: linear-gradient(#003388, #000088);
  box-shadow: inset 0 2px 0 rgba(255, 255, 255, 0.2), 0 2px 4px rgba(0, 0, 0, 0.05);
  color: #fff;
  font-size: 28px;
  white-space: nowrap;
}
.submit .btn {
  padding: 0 25px;
}
.results {
  width: 100%;
  max-width: 1956px;
  margin: 34px 0 28px;
  table-layout: fixed;
  border: 2px solid;
  border-width: 0 2px 2px 4px;
  border-color: #888 #888 #888 #f4f4f4;
  border-radius: 8px;
  border-spacing: 0 2px;
  text-align: center;
}
.results .entered {
  width: 500px;
}
.results .result {
  width: 522px;
}
.results th, .results td {
  padding: 0;
  border: 2px solid;
  border-color: #888 #f2f2f2 #f2f2f2 #888;
  background: #ddd;
}
.results th {
  height: 50px;
  border-top: 0;
}
.results td {
  height: 108px;
}
.results .wrong {
  background: #d69190;
}
.results th:first-child {
  border-top-left-radius: 8px;
}
.results th:last-child {
  border-top-right-radius: 8px;
}
.math {
  font-family: "Liberation Serif", "Times New Roman", serif;
  font-size: 34px;
  line-height: 1;
}
.results var {
  margin-left: 3px;
}
.error {
  color: #bf5351;
}
.problem {
  max-width: 1956px;
  margin-top: 20px;
  padding: 18px 18px 46px;
  border: 2px solid #e2e2e2;
  border-radius: 8px;
  background: #f4f4f4;
  box-shadow: inset 0 2px 2px rgba(0, 0, 0, 0.04);
}
.problem p .math {
  margin: 0 8px 0 5px;
}
.answer {
  margin-top: 28px;
  display: flex;
  align-items: center;
  gap: 21px;
}
.answer var {
  margin-right: 4px;
}
.field {
  position: relative;
}
.field input {
  display: block;
  width: 458px;
  height: 60px;
  padding: 0 12px;
  border: 2px solid #d26f6d;
  border-radius: 8px;
  outline: 0;
  background: #fff;
  box-shadow: 0 0 16px rgba(205, 80, 80, 0.5);
  font-family: inherit;
  font-size: 28px;
}
.caret {
  position: absolute;
  left: 30px;
  top: 11px;
  width: 2px;
  height: 36px;
  background: #000;
}
.suggest {
  position: absolute;
  left: -2px;
  top: 64px;
  width: 213px;
  padding-left: 32px;
  border: 1px solid #c3c5c8;
  border-radius: 12px;
  background: #dfe1e5;
  box-shadow: 0 10px 30px rgba(0, 0, 0, 0.3);
  font-family: Inter, sans-serif;
  font-size: 25px;
  line-height: 54px;
  color: #333;
}
.submit {
  margin: 40px 0 28px;
  padding-left: 7px;
  display: flex;
  gap: 14px;
}
.score {
  margin-bottom: 68px;
}

/* dock */
.dock {
  flex: none;
  height: 124px;
  margin: 0 80px;
  padding: 16px 8px 0;
  display: flex;
  border-radius: 12px 12px 0 0;
  background: linear-gradient(90deg, #456079, #4a6072 60%, #50657a);
  font-family: Inter, sans-serif;
}
.slot {
  flex: 1;
  position: relative;
}
.slot svg {
  width: 84px;
  height: 84px;
  margin: 0 auto;
  overflow: visible;
}
.petals rect {
  mix-blend-mode: multiply;
}
.running::after {
  content: "";
  position: absolute;
  left: calc(50% - 4px);
  top: 96px;
  width: 8px;
  height: 8px;
  border-radius: 50%;
  background: #000;
}
.badge {
  position: absolute;
  left: calc(50% + 14px);
  top: -4px;
  width: 34px;
  height: 34px;
  border-radius: 50%;
  background: #f23c34;
  color: #fff;
  font-size: 20px;
  font-weight: normal;
  line-height: 34px;
  text-align: center;
}
.divider {
  flex: 0 0 46px;
  height: 92px;
  background: linear-gradient(#1d3348, #1d3348) center / 2px 100% no-repeat;
}
```
